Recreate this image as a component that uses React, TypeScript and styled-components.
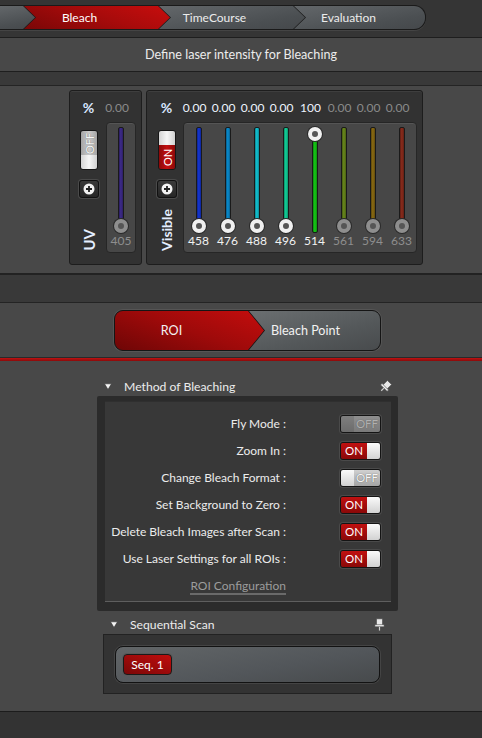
import React from "react";
import styled, { createGlobalStyle } from "styled-components";

const GlobalStyle = createGlobalStyle`
  html, body {
    margin: 0;
    padding: 0;
    background: #484848;
  }
  body {
    font-family: Lato, "Open Sans", sans-serif;
    width: 482px;
    height: 738px;
    overflow: hidden;
  }
`;

const Page = styled.div`
  width: 482px;
  height: 738px;
  display: flex;
  flex-direction: column;
  background: #484848;
  color: #e8e8e8;
`;

/* ---------- top step bar ---------- */

const TopBar = styled.div`
  height: 38px;
  box-sizing: border-box;
  padding-top: 5px;
  background: #353535;
  border-bottom: 1px solid #1e1e1e;
`;

const Crumbs = styled.div`
  display: flex;
  width: 426px;
  height: 25px;
  box-sizing: border-box;
  background: #1a1a1a;
  border: 1px solid #1a1a1a;
  border-left: none;
  border-radius: 0 12px 12px 0;
  overflow: hidden;
  box-shadow: 0 1px 0 #444;
`;

const Crumb = styled.div<{ $active?: boolean; $w?: number; $kind: "first" | "mid" | "last" }>`
  flex: ${(p) => (p.$kind === "last" ? "1" : "none")};
  width: ${(p) => (p.$w ? `${p.$w}px` : "auto")};
  margin-left: ${(p) => (p.$kind === "first" ? 0 : -11)}px;
  clip-path: ${(p) =>
    p.$kind === "first"
      ? "polygon(0 0, calc(100% - 12px) 0, 100% 50%, calc(100% - 12px) 100%, 0 100%)"
      : p.$kind === "last"
        ? "polygon(0 0, 100% 0, 100% 100%, 0 100%, 12px 50%)"
        : "polygon(0 0, calc(100% - 12px) 0, 100% 50%, calc(100% - 12px) 100%, 0 100%, 12px 50%)"};
  background: ${(p) =>
    p.$active
      ? "linear-gradient(20deg, #7a0707 0%, #a80b0b 55%, #c80d0d 100%)"
      : "linear-gradient(170deg, #63676a 0%, #4b4f52 70%, #45484b 100%)"};
  display: flex;
  align-items: center;
  justify-content: center;
  box-sizing: border-box;
  padding-right: ${(p) => (p.$kind === "last" ? 22 : 35)}px;
  font-size: 12px;
  color: ${(p) => (p.$active ? "#ffffff" : "#ececec")};
`;

const TitleBand = styled.div`
  height: 33px;
  display: flex;
  align-items: center;
  justify-content: center;
  background: #484848;
  border-bottom: 1px solid #1e1e1e;
  font-size: 12.6px;
  color: #ececec;
`;

const SpacerBand = styled.div<{ $h: number }>`
  height: ${(p) => p.$h}px;
  background: #393939;
  border-bottom: 1px solid #242424;
`;

/* ---------- laser panels ---------- */

const LaserArea = styled.div`
  height: 189px;
  box-sizing: border-box;
  padding: 4px 0 0 69px;
  display: flex;
  gap: 4px;
  background: #484848;
  border-bottom: 2px solid #222;
`;

const LaserPanel = styled.div<{ $w: number; $pl: number }>`
  width: ${(p) => p.$w}px;
  height: 175px;
  box-sizing: border-box;
  padding: 9px 7px 11px ${(p) => p.$pl}px;
  display: flex;
  gap: ${(p) => (p.$pl === 9 ? 8 : 7)}px;
  background: #323232;
  border: 1px solid #1d1d1d;
  border-radius: 3px;
  box-shadow: inset 0 1px 0 #3e3e3e;
`;

const CtrlCol = styled.div`
  width: 19px;
  display: flex;
  flex-direction: column;
  align-items: center;
`;

const Percent = styled.div`
  height: 16px;
  line-height: 16px;
  font-size: 14px;
  font-weight: 700;
  color: #d8e6ff;
`;

const VToggle = styled.div`
  margin-top: 14px;
  width: 18px;
  height: 40px;
  box-sizing: border-box;
  border: 1px solid #161616;
  border-radius: 3px;
  overflow: hidden;
  display: flex;
  flex-direction: column;
`;

const VKnob = styled.div`
  height: 14px;
  background: linear-gradient(90deg, #d4d4d4, #f6f6f6 50%, #d0d0d0);
`;

const VLabel = styled.div<{ $on?: boolean }>`
  flex: 1;
  display: flex;
  align-items: center;
  justify-content: center;
  writing-mode: vertical-rl;
  transform: rotate(180deg);
  font-size: 11px;
  background: ${(p) =>
    p.$on
      ? "linear-gradient(90deg, #8c0909, #c21010 50%, #8c0909)"
      : "linear-gradient(90deg, #a4a4a4, #cccccc 50%, #a4a4a4)"};
  color: ${(p) => (p.$on ? "#ffffff" : "#f6f6f6")};
  text-shadow: ${(p) => (p.$on ? "none" : "0 0 1px #555")};
`;

const PlusBtn = styled.div`
  margin-top: 10px;
  width: 20px;
  height: 18px;
  box-sizing: border-box;
  border: 1px solid #111;
  border-radius: 3px;
  background: linear-gradient(#3a3a3a, #262626);
  box-shadow: 0 0 0 1px #4a4a4a;
  display: flex;
  align-items: center;
  justify-content: center;
`;

const SideLabel = styled.div<{ $size: number }>`
  margin-top: auto;
  margin-bottom: 2px;
  writing-mode: vertical-rl;
  transform: rotate(180deg);
  font-size: ${(p) => p.$size}px;
  font-weight: 700;
  color: #e4eeff;
  line-height: 18px;
`;

const SliderCol = styled.div`
  display: flex;
  flex-direction: column;
`;

const ValuesRow = styled.div`
  height: 16px;
  margin-bottom: 6px;
  display: flex;
  margin-left: -3px;
`;

const Value = styled.div<{ $on?: boolean; $w: number }>`
  width: ${(p) => p.$w}px;
  text-align: center;
  line-height: 16px;
  font-size: 12px;
  color: ${(p) => (p.$on ? "#eef4ff" : "#8a8a8a")};
`;

const SliderBox = styled.div`
  height: 131px;
  box-sizing: border-box;
  display: flex;
  background: #474747;
  border: 1px solid #262626;
  border-radius: 4px;
  box-shadow: inset 0 1px 0 #555;
`;

const Channel = styled.div<{ $w: number }>`
  width: ${(p) => p.$w}px;
  display: flex;
  flex-direction: column;
  align-items: center;
  padding-top: 4px;
`;

const TrackWrap = styled.div`
  position: relative;
  width: 14px;
  height: 106px;
`;

const Track = styled.div<{ $c: string }>`
  position: absolute;
  left: 4px;
  top: 0;
  bottom: 0;
  width: 6px;
  box-sizing: border-box;
  border: 1px solid #1a1a1a;
  border-radius: 2px;
  background: linear-gradient(90deg, rgba(0, 0, 0, 0.35), ${(p) => p.$c} 45%, rgba(0, 0, 0, 0.3)),
    ${(p) => p.$c};
`;

const Knob = styled.div<{ $on?: boolean }>`
  position: absolute;
  left: 0;
  width: 14px;
  height: 14px;
  box-sizing: border-box;
  border-radius: 50%;
  border: 4px solid ${(p) => (p.$on ? "#f0f0f0" : "#8e8e8e")};
  background: #555;
  box-shadow: 0 0 0 1px #2a2a2a;
`;

const ChanLabel = styled.div<{ $on?: boolean }>`
  margin-top: 1px;
  font-size: 12px;
  line-height: 14px;
  color: ${(p) => (p.$on ? "#f2f2f2" : "#8e8e8e")};
`;

/* ---------- ROI / Bleach Point switch ---------- */

const RoiArea = styled.div`
  height: 55px;
  box-sizing: border-box;
  padding: 7px 0 0 114px;
  background: #484848;
  border-bottom: 1px solid #2a2a2a;
`;

const ModeSwitch = styled.div`
  width: 267px;
  height: 41px;
  box-sizing: border-box;
  display: flex;
  background: #151515;
  border: 1px solid #151515;
  border-radius: 9px;
  overflow: hidden;
  box-shadow: 0 0 0 1px #555;
`;

const ModeSeg = styled.div<{ $active?: boolean }>`
  flex: ${(p) => (p.$active ? "none" : "1")};
  width: ${(p) => (p.$active ? "149px" : "auto")};
  margin-left: ${(p) => (p.$active ? 0 : -15)}px;
  clip-path: ${(p) =>
    p.$active
      ? "polygon(0 0, calc(100% - 16px) 0, 100% 50%, calc(100% - 16px) 100%, 0 100%)"
      : "polygon(0 0, 100% 0, 100% 100%, 0 100%, 16px 50%)"};
  background: ${(p) =>
    p.$active
      ? "linear-gradient(20deg, #6e0606 0%, #9e0a0a 50%, #c40d0d 100%)"
      : "linear-gradient(165deg, #6b6f71 0%, #54585a 60%, #484b4d 100%)"};
  display: flex;
  align-items: center;
  justify-content: center;
  box-sizing: border-box;
  padding-right: ${(p) => (p.$active ? 36 : 18)}px;
  font-size: 12.6px;
  color: #f2f2f2;
`;

const RedRule = styled.div`
  height: 3px;
  background: linear-gradient(#c01212, #8a0a0a);
`;

/* ---------- lower sections ---------- */

const Lower = styled.div`
  flex: 1;
  box-sizing: border-box;
  padding: 15px 0 0 97px;
  background: #484848;
  border-bottom: 1px solid #1c1c1c;
`;

const Section = styled.div<{ $inset?: number }>`
  width: ${(p) => 301 - 2 * (p.$inset || 0)}px;
  margin-left: ${(p) => p.$inset || 0}px;
`;

const SectionHead = styled.div<{ $mt?: number }>`
  height: 20px;
  margin-top: ${(p) => p.$mt || 0}px;
  display: flex;
  align-items: center;
  padding: 0 6px 0 7px;
  font-size: 12.2px;
  color: #ececec;
`;

const HeadTitle = styled.span`
  margin-left: 12px;
  flex: 1;
`;

const MethodFrame = styled.div`
  height: 215px;
  box-sizing: border-box;
  padding: 5px 7px 9px 8px;
  background: #2b2b2b;
  border-radius: 2px;
`;

const MethodInner = styled.div`
  height: 201px;
  box-sizing: border-box;
  padding: 9px 10px 2px 0;
  background: #383838;
  border-bottom: 1px solid #5e5e5e;
  box-shadow: inset 0 1px 0 #2f2f2f;
`;

const OptRow = styled.div`
  height: 27px;
  display: flex;
  align-items: center;
`;

const OptLabel = styled.div`
  width: 181px;
  text-align: right;
  font-size: 12px;
  color: #ececec;
  white-space: nowrap;
`;

const OptLink = styled.span`
  font-size: 12px;
  color: #9c9c9c;
  border-bottom: 2px solid #6a6a6a;
  line-height: 15px;
`;

const HToggle = styled.div`
  margin-left: auto;
  width: 41px;
  height: 18px;
  box-sizing: border-box;
  display: flex;
  border: 1px solid #141414;
  border-radius: 3px;
  overflow: hidden;
  box-shadow: 0 0 0 1px #4a4a4a;
`;

const HKnob = styled.div<{ $dim?: boolean }>`
  width: 13px;
  background: ${(p) =>
    p.$dim
      ? "linear-gradient(#7e7e7e, #6c6c6c)"
      : "linear-gradient(#fafafa, #d2d2d2)"};
`;

const HState = styled.div<{ $on?: boolean; $dim?: boolean }>`
  flex: 1;
  display: flex;
  align-items: center;
  justify-content: center;
  font-size: 11.5px;
  background: ${(p) =>
    p.$on
      ? "linear-gradient(#c01010, #8a0808)"
      : p.$dim
        ? "linear-gradient(#8e8e8e, #7a7a7a)"
        : "linear-gradient(#d0d0d0, #a4a4a4)"};
  color: ${(p) => (p.$on ? "#ffffff" : p.$dim ? "#b0b0b0" : "#f6f6f6")};
  text-shadow: ${(p) => (p.$on ? "none" : p.$dim ? "0 0 1px #555" : "0 0 1px #444")};
`;

const SeqFrame = styled.div`
  height: 60px;
  box-sizing: border-box;
  padding: 11px 11px 0 11px;
  background: #333;
  border: 1px solid #222;
`;

const SeqTrack = styled.div`
  height: 37px;
  box-sizing: border-box;
  padding: 7px;
  background: linear-gradient(170deg, #626668 0%, #52565a 60%, #474a4c 100%);
  border: 1px solid #121212;
  border-radius: 8px;
  box-shadow: 0 0 0 1px #444;
`;

const SeqChip = styled.div`
  width: 49px;
  height: 21px;
  box-sizing: border-box;
  display: flex;
  align-items: center;
  justify-content: center;
  font-size: 12px;
  color: #fff;
  background: linear-gradient(20deg, #7a0707, #c00d0d);
  border: 1px solid #1a1a1a;
  border-radius: 4px;
  box-shadow: 0 0 0 1px #5a5a5a;
`;

const BottomBar = styled.div`
  height: 26px;
  background: #333;
`;

/* ---------- drawings ---------- */

const PlusIcon = () => (
  <svg width="12" height="12" viewBox="0 0 12 12">
    <circle cx="6" cy="6" r="5.5" fill="#f2f2f2" />
    <path d="M6 3v6M3 6h6" stroke="#222" strokeWidth="1.8" />
  </svg>
);

const Caret = () => (
  <svg width="8" height="7" viewBox="0 0 8 7">
    <path d="M0.5 0.8h7L4 6.5z" fill="#f4f4f4" stroke="#333" strokeWidth="0.6" />
  </svg>
);

const Pin = ({ tilted }: { tilted?: boolean }) => (
  <svg width="13" height="13" viewBox="0 0 12 12">
    <g transform={tilted ? "rotate(45 6 6)" : undefined}>
      <rect x="3.3" y="0.8" width="5.4" height="5.8" fill="#e8e8e8" stroke="#555" strokeWidth="0.6" />
      <rect x="1.8" y="6.3" width="8.4" height="1.8" fill="#f0f0f0" stroke="#555" strokeWidth="0.5" />
      <path d="M6 8.1v3.5" stroke="#cfcfcf" strokeWidth="1.1" />
    </g>
  </svg>
);

/* ---------- data ---------- */

type Chan = { nm: string; val: string; c: string; v: number; on: boolean };

const visible: Chan[] = [
  { nm: "458", val: "0.00", c: "#1436d6", v: 0, on: true },
  { nm: "476", val: "0.00", c: "#0a8ed2", v: 0, on: true },
  { nm: "488", val: "0.00", c: "#12c6d6", v: 0, on: true },
  { nm: "496", val: "0.00", c: "#12d49c", v: 0, on: true },
  { nm: "514", val: "100", c: "#16cc16", v: 1, on: true },
  { nm: "561", val: "0.00", c: "#6a8a1c", v: 0, on: false },
  { nm: "594", val: "0.00", c: "#8c6c12", v: 0, on: false },
  { nm: "633", val: "0.00", c: "#8c2c1c", v: 0, on: false },
];

const uv: Chan[] = [{ nm: "405", val: "0.00", c: "#3e2b8c", v: 0, on: false }];

const options = [
  { label: "Fly Mode :", on: false, dim: true },
  { label: "Zoom In :", on: true },
  { label: "Change Bleach Format :", on: false },
  { label: "Set Background to Zero :", on: true },
  { label: "Delete Bleach Images after Scan :", on: true },
  { label: "Use Laser Settings for all ROIs :", on: true },
];

function Sliders({ list, w }: { list: Chan[]; w: number }) {
  return (
    <SliderCol>
      <ValuesRow>
        {list.map((ch) => (
          <Value key={ch.nm} $w={w} $on={ch.on}>
            {ch.val}
          </Value>
        ))}
      </ValuesRow>
      <SliderBox>
        {list.map((ch) => (
          <Channel key={ch.nm} $w={w}>
            <TrackWrap>
              <Track $c={ch.c} />
              <Knob $on={ch.on} style={{ top: `${(1 - ch.v) * 92}px` }} />
            </TrackWrap>
            <ChanLabel $on={ch.on}>{ch.nm}</ChanLabel>
          </Channel>
        ))}
      </SliderBox>
    </SliderCol>
  );
}

function Toggle({ on, dim }: { on: boolean; dim?: boolean }) {
  return on ? (
    <HToggle>
      <HState $on>ON</HState>
      <HKnob />
    </HToggle>
  ) : (
    <HToggle>
      <HKnob $dim={dim} />
      <HState $dim={dim}>OFF</HState>
    </HToggle>
  );
}

export default function App() {
  return (
    <Page>
      <GlobalStyle />
      <TopBar>
        <Crumbs>
          <Crumb $kind="first" $w={35} />
          <Crumb $kind="mid" $w={146} $active>
            Bleach
          </Crumb>
          <Crumb $kind="mid" $w={146}>
            TimeCourse
          </Crumb>
          <Crumb $kind="last">Evaluation</Crumb>
        </Crumbs>
      </TopBar>
      <TitleBand>Define laser intensity for Bleaching</TitleBand>
      <SpacerBand $h={13} />

      <LaserArea>
        <LaserPanel $w={73} $pl={9}>
          <CtrlCol>
            <Percent>%</Percent>
            <VToggle>
              <VLabel>OFF</VLabel>
              <VKnob />
            </VToggle>
            <PlusBtn>
              <PlusIcon />
            </PlusBtn>
            <SideLabel $size={15}>UV</SideLabel>
          </CtrlCol>
          <Sliders list={uv} w={28} />
        </LaserPanel>
        <LaserPanel $w={277} $pl={10}>
          <CtrlCol>
            <Percent>%</Percent>
            <VToggle>
              <VKnob />
              <VLabel $on>ON</VLabel>
            </VToggle>
            <PlusBtn>
              <PlusIcon />
            </PlusBtn>
            <SideLabel $size={14}>Visible</SideLabel>
          </CtrlCol>
          <Sliders list={visible} w={29} />
        </LaserPanel>
      </LaserArea>
      <SpacerBand $h={27} />

      <RoiArea>
        <ModeSwitch>
          <ModeSeg $active>ROI</ModeSeg>
          <ModeSeg>Bleach Point</ModeSeg>
        </ModeSwitch>
      </RoiArea>
      <RedRule />

      <Lower>
        <Section>
          <SectionHead>
            <Caret />
            <HeadTitle>Method of Bleaching</HeadTitle>
            <Pin tilted />
          </SectionHead>
          <MethodFrame>
            <MethodInner>
              {options.map((o) => (
                <OptRow key={o.label}>
                  <OptLabel>{o.label}</OptLabel>
                  <Toggle on={o.on} dim={o.dim} />
                </OptRow>
              ))}
              <OptRow>
                <OptLabel>
                  <OptLink>ROI Configuration</OptLink>
                </OptLabel>
              </OptRow>
            </MethodInner>
          </MethodFrame>
        </Section>
        <Section $inset={6}>
          <SectionHead $mt={3}>
            <Caret />
            <HeadTitle>Sequential Scan</HeadTitle>
            <Pin />
          </SectionHead>
          <SeqFrame>
            <SeqTrack>
              <SeqChip>Seq. 1</SeqChip>
            </SeqTrack>
          </SeqFrame>
        </Section>
      </Lower>
      <BottomBar />
    </Page>
  );
}
